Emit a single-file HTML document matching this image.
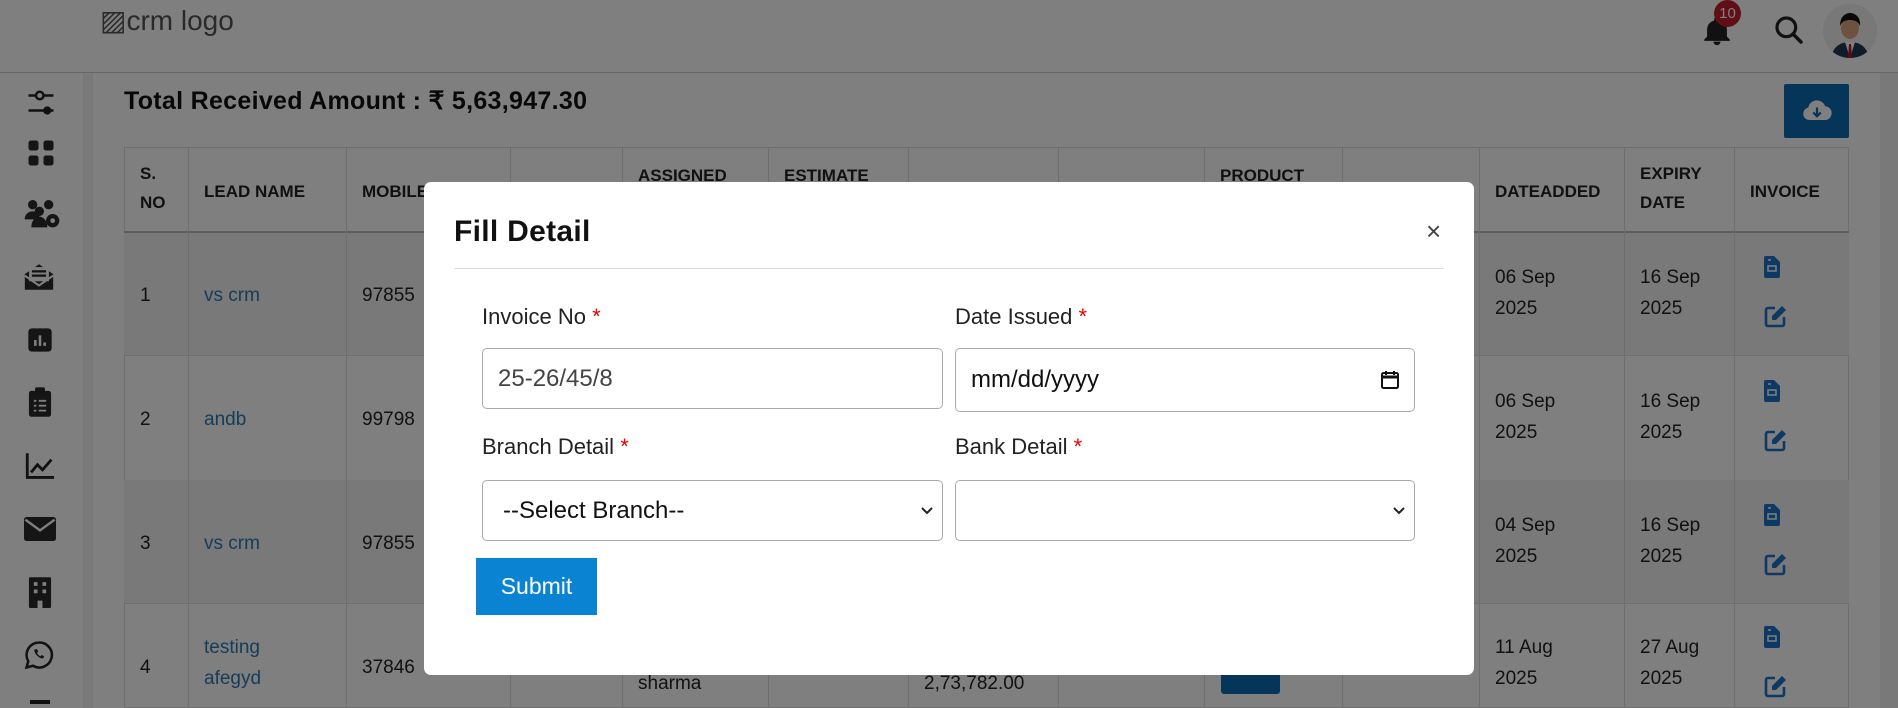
<!DOCTYPE html>
<html><head><meta charset="utf-8"><style>
*{box-sizing:border-box;margin:0;padding:0}
body{width:1898px;height:708px;overflow:hidden;background:#fff;font-family:"Liberation Sans",sans-serif;position:relative;color:#222}
.a{position:absolute}
.hdr{left:0;top:0;width:1898px;height:73px;background:#fff;border-bottom:1px solid #ccc}
.side{left:0;top:73px;width:83px;height:635px;background:#fff}
.strip{left:83px;top:73px;width:10px;height:635px;background:#f3f3f3}
.th{font-weight:bold;font-size:17px;color:#222;display:flex;align-items:center;padding-left:16px;line-height:1.7}
.td{font-size:19px;color:#222;display:flex;align-items:center;padding-left:16px;line-height:1.65}
.lnk{color:#2a7ab5}
.ov{left:0;top:0;width:1898px;height:708px;background:rgba(0,0,0,0.5)}
.modal{left:424px;top:182px;width:1050px;height:493px;background:#fff;border-radius:7px}
.lbl{font-size:22px;color:#222}
.lbl b{color:#e00;font-weight:normal}
.inp{border:1px solid #aaa;border-radius:5px;background:#fff;font-size:24px;color:#333;display:flex;align-items:center;padding-left:15px}
.ico{fill:#2a2a2a}
</style></head><body>
<div class="a hdr"></div>
<div class="a" style="left:100px;top:4px;font-size:28px;color:#555">▨crm logo</div>
<svg class="a" style="left:1700px;top:14px" width="34" height="34" viewBox="0 0 24 24"><path d="M12 22a2.5 2.5 0 0 0 2.5-2.5h-5A2.5 2.5 0 0 0 12 22zm7-6V11c0-3.1-2-5.6-5-6.3V4a2 2 0 0 0-4 0v.7C7 5.4 5 7.9 5 11v5l-2 2v1h18v-1z" fill="#222"/></svg>
<div class="a" style="left:1714px;top:0;width:27px;height:27px;border-radius:50%;background:#c21f2f;color:#fff;font-size:15px;display:flex;align-items:center;justify-content:center">10</div>
<svg class="a" style="left:1773px;top:14px" width="32" height="32" viewBox="0 0 24 24"><circle cx="10" cy="10" r="7" fill="none" stroke="#222" stroke-width="2.4"/><path d="M15 15l6 6" stroke="#222" stroke-width="2.6" stroke-linecap="round"/></svg>
<div class="a" style="left:1823px;top:4px;width:54px;height:54px;border-radius:50%;background:#f0f0f0;overflow:hidden">
<svg width="54" height="54" viewBox="0 0 54 54"><path d="M8 54c2-12 10-16 19-16s17 4 19 16z" fill="#1f3a56"/><path d="M22 38l5 16 5-16z" fill="#fff"/><path d="M26 40h2l1 14h-4z" fill="#c0141c"/><ellipse cx="27" cy="24" rx="9" ry="11" fill="#d9a47e"/><path d="M17 22c0-10 6-13 10-13s11 3 10 13c-2-5-6-6-10-6s-8 1-10 6z" fill="#111"/></svg></div>
<div class="a side"></div><div class="a strip"></div>
<svg class="a" style="left:26px;top:88px" width="30" height="30" viewBox="0 0 24 24"><path d="M2 6h6M14 6h8M2 18h12M20 18h2" stroke="#222" stroke-width="2"/><circle cx="11" cy="6" r="3" fill="none" stroke="#222" stroke-width="2"/><circle cx="17" cy="18" r="3.3" fill="#222"/></svg>
<svg class="a" style="left:26px;top:138px" width="30" height="30" viewBox="0 0 24 24"><rect x="2" y="2" width="8" height="8" rx="2" class="ico"/><rect x="14" y="2" width="8" height="8" rx="2" class="ico"/><rect x="2" y="14" width="8" height="8" rx="2" class="ico"/><rect x="14" y="14" width="8" height="8" rx="2" class="ico"/></svg>
<svg class="a" style="left:22px;top:198px" width="40" height="32" viewBox="0 0 30 24"><circle cx="8" cy="5" r="3.5" class="ico"/><circle cx="20" cy="5" r="3.5" class="ico"/><circle cx="13" cy="10" r="3.5" class="ico"/><path d="M2 16c0-4 3-6 6-6s5 2 5 2v4zM7 22c0-5 3-8 6-8s6 3 6 8z" class="ico"/><circle cx="23" cy="17" r="5" class="ico"/><circle cx="23" cy="17" r="1.8" fill="#fff"/></svg>
<svg class="a" style="left:22px;top:260px" width="34" height="34" viewBox="0 0 24 24"><path d="M2 10l10-7 10 7v11H2z" class="ico"/><rect x="5" y="5" width="14" height="10" fill="#fff"/><path d="M7 8h10M7 11h10" stroke="#222" stroke-width="1.6"/><path d="M2 11l10 7 10-7" stroke="#fff" stroke-width="1.5" fill="none"/></svg>
<svg class="a" style="left:26px;top:326px" width="28" height="28" viewBox="0 0 24 24"><rect x="2" y="2" width="20" height="20" rx="3" class="ico"/><path d="M8 17v-5M12 17V8M16 17v-3" stroke="#fff" stroke-width="2.2"/></svg>
<svg class="a" style="left:27px;top:386px" width="26" height="32" viewBox="0 0 20 26"><rect x="1" y="4" width="18" height="21" rx="2" class="ico"/><rect x="6" y="1" width="8" height="5" rx="1.5" class="ico"/><path d="M5 12h2M9 12h6M5 16h2M9 16h6M5 20h2M9 20h6" stroke="#fff" stroke-width="1.5"/></svg>
<svg class="a" style="left:24px;top:452px" width="32" height="28" viewBox="0 0 24 22"><path d="M2 1v19h21" stroke="#222" stroke-width="2.2" fill="none"/><path d="M5 16l5-6 4 4 7-8" stroke="#222" stroke-width="2.2" fill="none"/></svg>
<svg class="a" style="left:24px;top:516px" width="32" height="26" viewBox="0 0 24 18"><rect x="0" y="0" width="24" height="18" rx="2" class="ico"/><path d="M1 2l11 8 11-8" stroke="#fff" stroke-width="1.8" fill="none"/></svg>
<svg class="a" style="left:27px;top:576px" width="26" height="32" viewBox="0 0 20 26"><rect x="1" y="1" width="18" height="25" rx="1" class="ico"/><path d="M5 5h3v3H5zM12 5h3v3h-3zM5 11h3v3H5zM12 11h3v3h-3zM8 20h4v6H8z" fill="#fff"/></svg>
<svg class="a" style="left:24px;top:640px" width="30" height="30" viewBox="0 0 24 24"><path d="M12 2a10 10 0 0 0-8.6 15L2 22l5.2-1.4A10 10 0 1 0 12 2z" fill="none" stroke="#222" stroke-width="2"/><path d="M8.5 7.5c-.6 1 0 3 2 5s4 2.7 5 2l.6-1.5-2-1-1 1c-1-.4-2.3-1.7-2.7-2.7l1-1-1-2z" class="ico"/></svg>
<div class="a" style="left:30px;top:700px;width:20px;height:4px;background:#222"></div>
<div class="a" style="left:124px;top:86px;font-size:25px;font-weight:bold;color:#111;letter-spacing:0.3px">Total Received Amount : ₹ 5,63,947.30</div>
<div class="a" style="left:1784px;top:84px;width:65px;height:54px;background:#0b6bb0;border-radius:2px"><svg style="margin:13px 0 0 18px" width="30" height="26" viewBox="0 0 24 20"><path d="M6 18a5 5 0 0 1-1-9.9A7 7 0 0 1 18.5 7 5.5 5.5 0 0 1 18 18z" fill="#fff"/><path d="M12 8v7M9 12l3 3 3-3" stroke="#0b6bb0" stroke-width="1.8" fill="none"/></svg></div>
<div class="a" style="left:124px;top:147px;width:1725px;height:561px;background:#fff;border:1px solid #ddd"></div>
<div class="a" style="left:124px;top:232px;width:1725px;height:123px;background:#f2f2f2"></div>
<div class="a" style="left:124px;top:480px;width:1725px;height:123px;background:#f2f2f2"></div>
<div class="a" style="left:124px;top:231px;width:1725px;height:2px;background:#bbb"></div>
<div class="a" style="left:124px;top:355px;width:1725px;height:1px;background:#ddd"></div>
<div class="a" style="left:124px;top:603px;width:1725px;height:1px;background:#ddd"></div>
<div class="a" style="left:188px;top:147px;width:1px;height:561px;background:#ddd"></div>
<div class="a" style="left:346px;top:147px;width:1px;height:561px;background:#ddd"></div>
<div class="a" style="left:510px;top:147px;width:1px;height:561px;background:#ddd"></div>
<div class="a" style="left:622px;top:147px;width:1px;height:561px;background:#ddd"></div>
<div class="a" style="left:768px;top:147px;width:1px;height:561px;background:#ddd"></div>
<div class="a" style="left:908px;top:147px;width:1px;height:561px;background:#ddd"></div>
<div class="a" style="left:1058px;top:147px;width:1px;height:561px;background:#ddd"></div>
<div class="a" style="left:1204px;top:147px;width:1px;height:561px;background:#ddd"></div>
<div class="a" style="left:1342px;top:147px;width:1px;height:561px;background:#ddd"></div>
<div class="a" style="left:1479px;top:147px;width:1px;height:561px;background:#ddd"></div>
<div class="a" style="left:1624px;top:147px;width:1px;height:561px;background:#ddd"></div>
<div class="a" style="left:1734px;top:147px;width:1px;height:561px;background:#ddd"></div>
<div class="a" style="left:1880px;top:73px;width:18px;height:635px;background:#f3f3f3"></div>
<div class="a th" style="left:124px;top:160px">S.<br>NO</div>
<div class="a th" style="left:188px;top:178px">LEAD NAME</div>
<div class="a th" style="left:346px;top:178px">MOBILE</div>
<div class="a th" style="left:622px;top:162px">ASSIGNED</div>
<div class="a th" style="left:768px;top:162px">ESTIMATE</div>
<div class="a th" style="left:1204px;top:162px">PRODUCT</div>
<div class="a th" style="left:1479px;top:178px">DATEADDED</div>
<div class="a th" style="left:1624px;top:160px">EXPIRY<br>DATE</div>
<div class="a th" style="left:1734px;top:178px">INVOICE</div>
<div class="a td" style="left:124px;top:280px">1</div><div class="a td lnk" style="left:188px;top:280px">vs crm</div><div class="a td" style="left:346px;top:280px">97855</div>
<div class="a td" style="left:124px;top:404px">2</div><div class="a td lnk" style="left:188px;top:404px">andb</div><div class="a td" style="left:346px;top:404px">99798</div>
<div class="a td" style="left:124px;top:528px">3</div><div class="a td lnk" style="left:188px;top:528px">vs crm</div><div class="a td" style="left:346px;top:528px">97855</div>
<div class="a td" style="left:124px;top:652px">4</div><div class="a td lnk" style="left:188px;top:632px">testing<br>afegyd</div><div class="a td" style="left:346px;top:652px">37846</div>
<div class="a td" style="left:622px;top:668px">sharma</div><div class="a td" style="left:908px;top:668px">2,73,782.00</div>
<div class="a" style="left:1221px;top:672px;width:59px;height:22px;background:#0b6bb0;border-radius:3px"></div>
<div class="a td" style="left:1479px;top:262px">06 Sep<br>2025</div><div class="a td" style="left:1624px;top:262px">16 Sep<br>2025</div>
<div class="a td" style="left:1479px;top:386px">06 Sep<br>2025</div><div class="a td" style="left:1624px;top:386px">16 Sep<br>2025</div>
<div class="a td" style="left:1479px;top:510px">04 Sep<br>2025</div><div class="a td" style="left:1624px;top:510px">16 Sep<br>2025</div>
<div class="a td" style="left:1479px;top:632px">11 Aug<br>2025</div><div class="a td" style="left:1624px;top:632px">27 Aug<br>2025</div>
<svg class="a" style="left:1764px;top:256px" width="16" height="22" viewBox="0 0 16 22"><path d="M0 2a2 2 0 0 1 2-2h8l6 6v14a2 2 0 0 1-2 2H2a2 2 0 0 1-2-2z" fill="#1a73c8"/><path d="M4 10h8v5H4zM4 4h3" stroke="#fff" stroke-width="1.5" fill="none"/></svg>
<svg class="a" style="left:1764px;top:304px" width="24" height="24" viewBox="0 0 24 24"><path d="M20 13v7a2 2 0 0 1-2 2H4a2 2 0 0 1-2-2V6a2 2 0 0 1 2-2h7" stroke="#1a73c8" stroke-width="2.6" fill="none"/><path d="M18 2l4 4-10 10H8v-4z" fill="#1a73c8"/></svg>
<svg class="a" style="left:1764px;top:380px" width="16" height="22" viewBox="0 0 16 22"><path d="M0 2a2 2 0 0 1 2-2h8l6 6v14a2 2 0 0 1-2 2H2a2 2 0 0 1-2-2z" fill="#1a73c8"/><path d="M4 10h8v5H4zM4 4h3" stroke="#fff" stroke-width="1.5" fill="none"/></svg>
<svg class="a" style="left:1764px;top:428px" width="24" height="24" viewBox="0 0 24 24"><path d="M20 13v7a2 2 0 0 1-2 2H4a2 2 0 0 1-2-2V6a2 2 0 0 1 2-2h7" stroke="#1a73c8" stroke-width="2.6" fill="none"/><path d="M18 2l4 4-10 10H8v-4z" fill="#1a73c8"/></svg>
<svg class="a" style="left:1764px;top:504px" width="16" height="22" viewBox="0 0 16 22"><path d="M0 2a2 2 0 0 1 2-2h8l6 6v14a2 2 0 0 1-2 2H2a2 2 0 0 1-2-2z" fill="#1a73c8"/><path d="M4 10h8v5H4zM4 4h3" stroke="#fff" stroke-width="1.5" fill="none"/></svg>
<svg class="a" style="left:1764px;top:552px" width="24" height="24" viewBox="0 0 24 24"><path d="M20 13v7a2 2 0 0 1-2 2H4a2 2 0 0 1-2-2V6a2 2 0 0 1 2-2h7" stroke="#1a73c8" stroke-width="2.6" fill="none"/><path d="M18 2l4 4-10 10H8v-4z" fill="#1a73c8"/></svg>
<svg class="a" style="left:1764px;top:626px" width="16" height="22" viewBox="0 0 16 22"><path d="M0 2a2 2 0 0 1 2-2h8l6 6v14a2 2 0 0 1-2 2H2a2 2 0 0 1-2-2z" fill="#1a73c8"/><path d="M4 10h8v5H4zM4 4h3" stroke="#fff" stroke-width="1.5" fill="none"/></svg>
<svg class="a" style="left:1764px;top:674px" width="24" height="24" viewBox="0 0 24 24"><path d="M20 13v7a2 2 0 0 1-2 2H4a2 2 0 0 1-2-2V6a2 2 0 0 1 2-2h7" stroke="#1a73c8" stroke-width="2.6" fill="none"/><path d="M18 2l4 4-10 10H8v-4z" fill="#1a73c8"/></svg>
<div class="a ov"></div>
<div class="a modal">
<div class="a" style="left:30px;top:33px;font-size:30px;font-weight:bold;color:#111;letter-spacing:0.3px">Fill Detail</div>
<div class="a" style="left:1002px;top:34px;font-size:26px;color:#444">×</div>
<div class="a" style="left:30px;top:86px;width:990px;height:1px;background:#ddd"></div>
<div class="a lbl" style="left:58px;top:122px">Invoice No <b>*</b></div>
<div class="a lbl" style="left:531px;top:122px">Date Issued <b>*</b></div>
<div class="a inp" style="left:58px;top:166px;width:461px;height:61px;color:#444">25-26/45/8</div>
<div class="a inp" style="left:531px;top:166px;width:460px;height:64px;color:#111;justify-content:space-between;padding-right:14px">mm/dd/yyyy<svg width="20" height="20" viewBox="0 0 20 20"><rect x="2" y="3" width="16" height="15" rx="1.5" fill="none" stroke="#111" stroke-width="2"/><path d="M2 7h16" stroke="#111" stroke-width="3"/><path d="M6 1v4M14 1v4" stroke="#111" stroke-width="2"/></svg></div>
<div class="a lbl" style="left:58px;top:252px">Branch Detail <b>*</b></div>
<div class="a lbl" style="left:531px;top:252px">Bank Detail <b>*</b></div>
<div class="a inp" style="left:58px;top:298px;width:461px;height:61px;color:#111;justify-content:space-between;padding-right:8px;padding-left:20px">--Select Branch--<svg width="14" height="10" viewBox="0 0 14 10"><path d="M2 2l5 5 5-5" stroke="#222" stroke-width="2" fill="none"/></svg></div>
<div class="a inp" style="left:531px;top:298px;width:460px;height:61px;justify-content:flex-end;padding-right:8px"><svg width="14" height="10" viewBox="0 0 14 10"><path d="M2 2l5 5 5-5" stroke="#222" stroke-width="2" fill="none"/></svg></div>
<div class="a" style="left:52px;top:376px;width:121px;height:57px;background:#0a84d2;color:#fff;font-size:23px;display:flex;align-items:center;justify-content:center">Submit</div>
</div>
</body></html>
